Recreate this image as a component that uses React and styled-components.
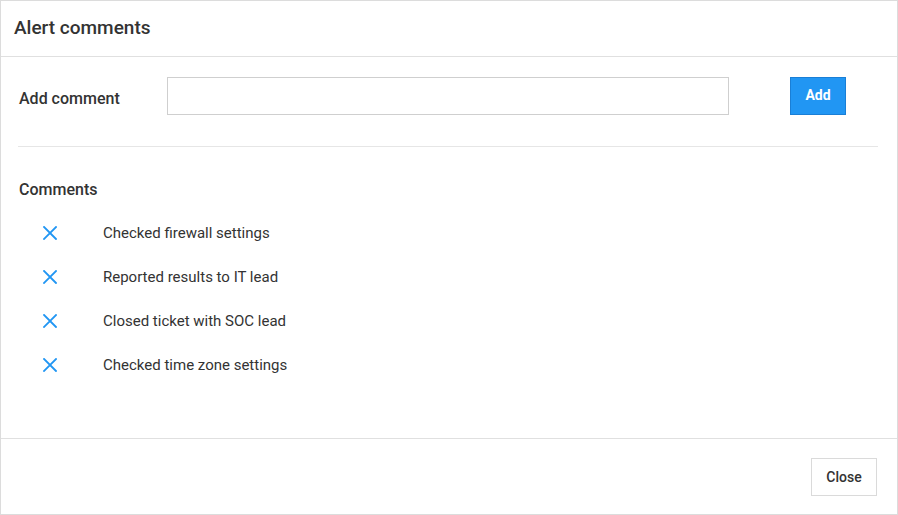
import React from "react";
import styled, { createGlobalStyle } from "styled-components";

const Global = createGlobalStyle`
  html, body { margin: 0; padding: 0; background: #fff; }
  * { box-sizing: border-box; }
  body { font-family: Roboto, "Liberation Sans", Arial, sans-serif; color: #333; }
`;

const Dialog = styled.div`
  width: 898px;
  height: 515px;
  border: 1px solid #dcdcdc;
  display: flex;
  flex-direction: column;
  background: #fff;
`;

const Header = styled.div`
  height: 56px;
  border-bottom: 1px solid #e0e0e0;
  display: flex;
  align-items: center;
  padding: 0 13px;
  flex-shrink: 0;
`;

const Title = styled.h2`
  margin: 0;
  font-size: 19px;
  line-height: 24px;
  font-weight: 500;
  color: #333;
  padding-bottom: 1px;
`;

const Body = styled.div`
  flex: 1;
  padding: 20px 19px 0 17px;
  display: flex;
  flex-direction: column;
`;

const AddRow = styled.div`
  display: flex;
  align-items: flex-start;
  padding-bottom: 31px;
  border-bottom: 1px solid #e6e6e6;
`;

const Label = styled.label`
  width: 149px;
  padding-left: 1px;
  margin-top: 12px;
  font-size: 16px;
  line-height: 20px;
  font-weight: 500;
  color: #333;
  flex-shrink: 0;
`;

const Input = styled.input`
  width: 562px;
  height: 38px;
  border: 1px solid #cfcfcf;
  background: #fff;
  padding: 0 10px;
  font: inherit;
  outline: none;
`;

const PrimaryButton = styled.button`
  margin-left: 61px;
  width: 56px;
  height: 38px;
  background: #2196f3;
  border: 1px solid #1a7fd6;
  color: #fff;
  font-family: Roboto, "Liberation Sans", Arial, sans-serif;
  font-size: 14px;
  font-weight: 700;
  padding: 0 0 2px;
  cursor: pointer;
`;

const Section = styled.div`
  padding-top: 33px;
`;

const SectionTitle = styled.h3`
  margin: 0 0 11px 1px;
  font-size: 16px;
  line-height: 20px;
  font-weight: 500;
  color: #333;
`;

const List = styled.ul`
  list-style: none;
  margin: 0;
  padding: 0;
`;

const Item = styled.li`
  height: 44px;
  display: flex;
  align-items: center;
  padding-left: 25px;
`;

const RemoveButton = styled.button`
  width: 14px;
  height: 14px;
  padding: 0;
  border: 0;
  background: none;
  display: flex;
  cursor: pointer;
  margin-right: 46px;
`;

const ItemText = styled.span`
  font-size: 15px;
  line-height: 20px;
  color: #333;
`;

const Footer = styled.div`
  height: 76px;
  border-top: 1px solid #e0e0e0;
  display: flex;
  justify-content: flex-end;
  align-items: flex-start;
  padding: 19px 20px 0 0;
  flex-shrink: 0;
`;

const SecondaryButton = styled.button`
  width: 66px;
  height: 38px;
  background: #fff;
  border: 1px solid #dadada;
  color: #333;
  font-family: Roboto, "Liberation Sans", Arial, sans-serif;
  font-size: 14px;
  font-weight: 500;
  padding: 0 0 1px;
  cursor: pointer;
`;

const XIcon = () => (
  <svg width="14" height="14" viewBox="0 0 14 14">
    <path d="M1 1L13 13M13 1L1 13" stroke="#2196f3" strokeWidth="1.8" strokeLinecap="square" fill="none" />
  </svg>
);

const comments = [
  "Checked firewall settings",
  "Reported results to IT lead",
  "Closed ticket with SOC lead",
  "Checked time zone settings",
];

export default function App() {
  return (
    <>
      <Global />
      <Dialog>
        <Header>
          <Title>Alert comments</Title>
        </Header>
        <Body>
          <AddRow>
            <Label>Add comment</Label>
            <Input type="text" />
            <PrimaryButton>Add</PrimaryButton>
          </AddRow>
          <Section>
            <SectionTitle>Comments</SectionTitle>
            <List>
              {comments.map((c) => (
                <Item key={c}>
                  <RemoveButton aria-label="Remove">
                    <XIcon />
                  </RemoveButton>
                  <ItemText>{c}</ItemText>
                </Item>
              ))}
            </List>
          </Section>
        </Body>
        <Footer>
          <SecondaryButton>Close</SecondaryButton>
        </Footer>
      </Dialog>
    </>
  );
}
